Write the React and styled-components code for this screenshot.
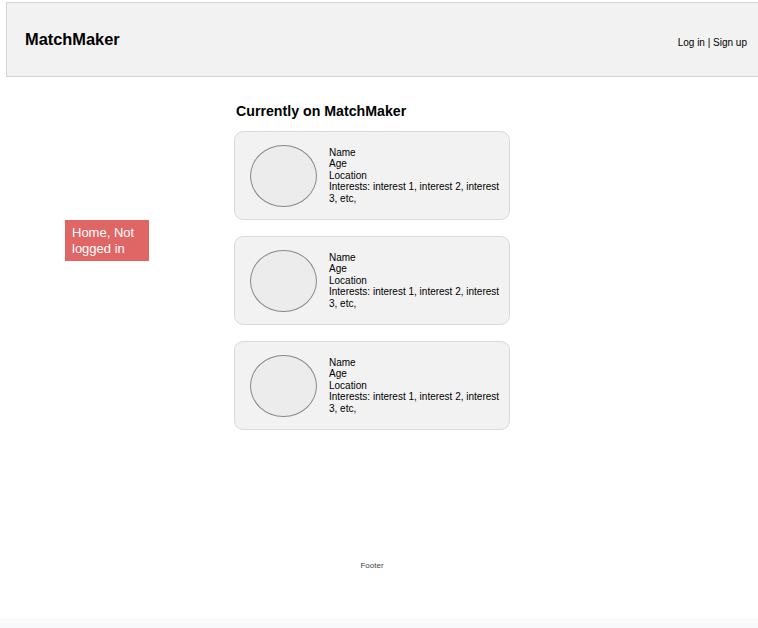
import React from 'react'
import styled, { createGlobalStyle } from 'styled-components'

const GlobalStyle = createGlobalStyle`
    html, body {
        margin: 0;
        padding: 0;
        background: #ffffff;
        overflow: hidden;
    }
    body {
        font-family: "Liberation Sans", Arial, sans-serif;
        color: #000;
    }
`

const Page = styled.div`
    display: flex;
    flex-direction: column;
    height: 628px;
`

const Header = styled.header`
    display: flex;
    align-items: center;
    justify-content: space-between;
    height: 73px;
    margin: 2px 0 0 6px;
    padding: 0 11px 0 18px;
    background: #f2f2f2;
    border: 1px solid #d4d4d4;
    border-right: none;
`

const Brand = styled.h1`
    margin: 0;
    font-size: 16.4px;
    font-weight: bold;
`

const AuthLinks = styled.div`
    font-size: 10px;
    padding-top: 6px;
`

const Main = styled.main`
    display: flex;
    align-items: flex-start;
    padding-left: 65px;
`

const Note = styled.div`
    width: 70px;
    margin-top: 143px;
    padding: 5px 7px 4px;
    background: #e06666;
    color: #fff;
    font-size: 13px;
    line-height: 16px;
`

const Feed = styled.section`
    width: 276px;
    margin-left: 85px;
    padding-top: 26px;
`

const FeedTitle = styled.h2`
    margin: 0 0 12px 2px;
    font-size: 14.2px;
    line-height: 16px;
    font-weight: bold;
`

const Card = styled.div`
    box-sizing: border-box;
    display: flex;
    align-items: center;
    gap: 12px;
    height: 89px;
    margin-bottom: 16px;
    padding-left: 15px;
    background: #f2f2f2;
    border: 1px solid #dadada;
    border-radius: 9px;
`

const Avatar = styled.div`
    flex: none;
    box-sizing: border-box;
    width: 67px;
    height: 62px;
    border: 1px solid #888;
    border-radius: 50%;
    background: #ececec;
`

const Details = styled.div`
    width: 172px;
    font-size: 10px;
    line-height: 11.6px;
`

const Footer = styled.footer`
    margin-top: 115px;
    text-align: center;
    font-size: 8px;
    line-height: 10px;
    color: #444;
    transform: translateX(-7px);
`

const BottomBand = styled.div`
    margin-top: auto;
    height: 10px;
    background: #f8f9fa;
`

const people = [1, 2, 3]

export default function App() {
    return (
        <Page>
            <GlobalStyle />
            <Header>
                <Brand>MatchMaker</Brand>
                <AuthLinks>Log in | Sign up</AuthLinks>
            </Header>

            <Main>
                <Note>Home, Not logged in</Note>
                <Feed>
                    <FeedTitle>Currently on MatchMaker</FeedTitle>
                    {people.map(p => (
                        <Card key={p}>
                            <Avatar />
                            <Details>
                                Name
                                <br />
                                Age
                                <br />
                                Location
                                <br />
                                Interests: interest 1, interest 2, interest 3, etc,
                            </Details>
                        </Card>
                    ))}
                </Feed>
            </Main>

            <Footer>Footer</Footer>
            <BottomBand />
        </Page>
    )
}
